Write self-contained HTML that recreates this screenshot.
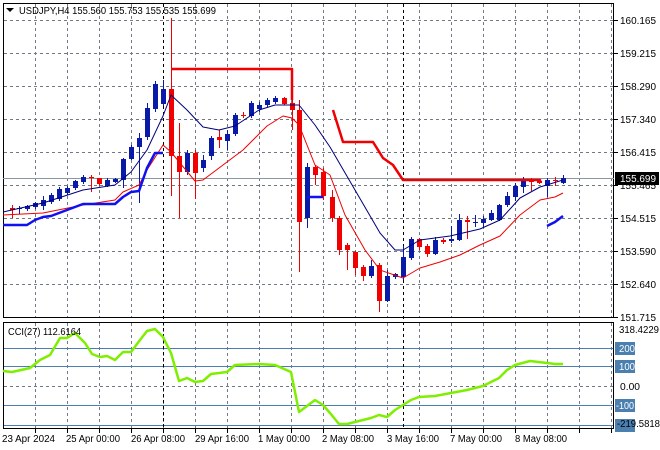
<!DOCTYPE html>
<html><head><meta charset="utf-8"><style>
html,body{margin:0;padding:0;background:#fff;width:660px;height:450px;overflow:hidden}
svg{display:block}
text{font-family:"Liberation Sans",sans-serif;font-size:10px;fill:#000}
</style></head><body>
<svg id="s" width="660" height="450" xmlns="http://www.w3.org/2000/svg">
<rect x="0" y="0" width="660" height="450" fill="#fff"/>
<g id="grid" stroke="#6f7a86" stroke-width="1" stroke-dasharray="3,3"></g>
<g id="lev"></g>
<rect x="3.5" y="3.5" width="610" height="314" fill="none" stroke="#000"/>
<rect x="3.5" y="322.5" width="610" height="106" fill="none" stroke="#000"/>
<line x1="3" y1="178.5" x2="614" y2="178.5" stroke="#8a96a0"/>
<line x1="163.5" y1="4" x2="163.5" y2="428" stroke="#000" stroke-dasharray="3,3"/>
<line x1="403.5" y1="4" x2="403.5" y2="428" stroke="#000" stroke-dasharray="3,3"/>
<g id="cand"></g>
<g id="lines"></g>
<g id="axis"></g>
<path d="M6 8 L14 8 L10 12 Z" fill="#000"/>
<text x="19" y="14" textLength="197" lengthAdjust="spacingAndGlyphs">USDJPY,H4  155.560 155.753 155.535 155.699</text>
<text x="8" y="335" textLength="73" lengthAdjust="spacingAndGlyphs">CCI(27) 112.6164</text>
</svg>
<script>
var NS="http://www.w3.org/2000/svg";
function el(p,n,a){var e=document.createElementNS(NS,n);for(var k in a)e.setAttribute(k,a[k]);document.getElementById(p).appendChild(e);return e;}
for(var x=35;x<614;x+=32){el("grid","line",{x1:x+.5,y1:4,x2:x+.5,y2:317});el("grid","line",{x1:x+.5,y1:323,x2:x+.5,y2:428});}
[20,53,86,119,152,185,218,251,284].forEach(function(y){el("grid","line",{x1:4,y1:y+.5,x2:613,y2:y+.5});});
el("grid","line",{x1:4,y1:386.5,x2:613,y2:386.5});
[348,366,405,425].forEach(function(y){el("lev","line",{x1:4,y1:y+.5,x2:613,y2:y+.5,stroke:"#4a7fb0"});});
var C=[[12,208,210,205,218],[19,209,208,206,214],[27,209,206,205,211],[35,207,203,202,209],[43,206,200,196,210],[51,202,195,193,204],[59,199,189,187,201],[67,193,188,186,195],[75,188,181,180,190],[83,182,177,175,184],[91,177,178,175,192],[99,178,184,178,186],[107,186,180,178,187],[115,182,179,178,183],[123,180,159,158,188],[131,159,147,145,160],[139,147,138,133,203],[147,137,108,103,140],[155,109,84,81,112],[163,104,89,80,106],[171,89,156,18,196],[179,156,172,123,218],[187,172,153,150,175],[195,153,173,150,199],[203,168,160,155,172],[211,156,138,136,160],[219,137,140,130,148],[227,141,134,130,150],[235,134,115,113,136],[243,115,116,112,118],[251,116,103,101,118],[259,109,105,102,112],[267,105,100,98,107],[275,102,98,96,104],[284,98,104,97,105],[292,103,110,68,130],[299,110,222,100,272],[307,218,167,163,228],[315,167,175,165,185],[323,172,196,168,200],[332,197,218,190,222],[339,218,250,216,255],[347,245,250,243,270],[355,252,268,251,275],[363,267,276,265,281],[371,276,266,260,278],[379,265,301,263,312],[387,301,276,270,302],[395,277,274,273,279],[403,277,257,246,280],[411,258,239,237,260],[419,239,247,238,250],[427,246,254,244,257],[435,254,240,237,255],[443,240,242,238,244],[451,241,239,226,243],[459,240,220,214,241],[467,220,222,216,239],[475,223,222,215,227],[483,223,219,216,228],[491,220,213,210,221],[499,220,205,204,221],[507,205,196,192,207],[515,197,186,183,201],[523,187,179,177,193],[531,180,182,178,191],[539,181,183,179,184],[547,186,180,178,197],[555,180,181,177,186],[563,183,178,175,184]];
C.forEach(function(c){var up=c[2]<c[1];var col=up?"#0a1aa8":"#f00000";
el("cand","line",{x1:c[0]+.5,y1:c[3],x2:c[0]+.5,y2:c[4],stroke:col});
var t=Math.min(c[1],c[2]),h=Math.max(1,Math.abs(c[1]-c[2]));
el("cand","rect",{x:c[0]-2,y:t,width:5,height:h,fill:col});});
function pl(pts,col,w){el("lines","polyline",{points:pts,fill:"none",stroke:col,"stroke-width":w,"stroke-linejoin":"round"});}
pl("3,212 43,203 83,190 115,185 131,172 147,150 163,116 171,95 187,110 203,127 219,130 235,126 259,110 275,105 299,105 315,125 330,147 355,190 380,233 395,250 403,250 420,240 450,236 480,229 500,220 520,198 540,187 563,180","#00007a",1);
pl("3,215 43,213 83,205 115,200 123,192 139,185 147,170 163,145 171,152 180,163 195,181 203,180 219,168 243,150 267,126 283,116 292,118 299,125 315,165 330,175 345,215 365,250 380,270 403,278 420,268 440,262 460,255 480,245 500,236 520,215 540,200 555,197 563,193","#f00000",1);
pl("3,225 27,225 35,220 43,217 51,216 67,210 75,207 83,204 115,204 123,197 131,192 139,191 147,168 155,153 163,153","#1010f0",2.5);
pl("307,197 323,197","#1010f0",2.5);
pl("547,226 555,222 563,216","#1010f0",2.5);
pl("171,69 292,69 292,100","#f00000",2.5);
pl("333,110 343,142 373,142 383,158 393,165 403,180 540,180 540,183","#f00000",2.5);
pl("3,371 12,372 30,368 40,360 50,355 60,338 67,338 75,333 85,343 92,354 100,357 107,356 115,360 123,352 131,352 140,340 147,331 155,329 163,337 171,353 179,381 187,378 195,382 203,381 211,374 227,372 235,365 259,364 275,365 291,372 299,412 315,400 323,405 330,413 339,424 347,424 363,420 371,418 379,415 387,417 395,410 403,405 411,400 419,397 435,396 451,393 467,390 483,386 499,378 507,370 515,365 530,361 547,363 555,364 563,364","#7fef00",2.5);
function tx(s,x,y,w,st){var a={x:x,y:y};if(w){a.textLength=w;a.lengthAdjust="spacingAndGlyphs";}if(st)a.style=st;var t=el("axis","text",a);t.textContent=s;}
[["160.165",20],["159.215",53],["158.290",86],["157.340",119],["156.415",152],["155.465",185],["154.515",218],["153.590",251],["152.640",284],["151.715",317]].forEach(function(a){
el("axis","line",{x1:614,y1:a[1]+.5,x2:618,y2:a[1]+.5,stroke:"#000"});tx(a[0],620,a[1]+4,36);});
el("axis","rect",{x:615,y:172,width:44,height:13,fill:"#000"});
tx("155.699",620,182,36,"fill:#fff");
tx("318.4229",619,333,40);
[["200",348],["100",366],["-100",405]].forEach(function(a){el("axis","rect",{x:615,y:a[1]-6,width:20,height:13,fill:"#4a7fb0"});tx(a[0],a[0].length>3?616:619,a[1]+4,a[0].length>3?18:16,"fill:#fff");});
tx("0.00",620,390,20);
el("axis","rect",{x:615,y:419,width:20,height:13,fill:"#4a7fb0"});
tx("-219.5818",617,427,43);
[["23 Apr 2024",2,53],["25 Apr 00:00",66,54],["26 Apr 08:00",131,54],["29 Apr 16:00",195,54],["1 May 00:00",258,52],["2 May 08:00",322,52],["3 May 16:00",387,52],["7 May 00:00",450,52],["8 May 08:00",515,52]].forEach(function(a){tx(a[0],a[1],442,a[2]);});
for(var x=35;x<614;x+=32)el("axis","line",{x1:x+.5,y1:429,x2:x+.5,y2:433,stroke:"#000"});
</script>
</body></html>
